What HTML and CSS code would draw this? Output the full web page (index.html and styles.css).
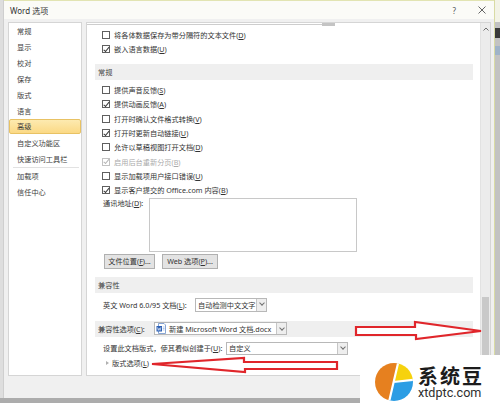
FILE: index.html
```html
<!DOCTYPE html>
<html lang="zh-CN">
<head>
<meta charset="utf-8">
<title>Word 选项</title>
<link rel="stylesheet" href="styles.css">
</head>
<body>
<div class="screen">
  <div class="left-edge"></div>
  <div class="dialog">
    <div class="titlebar">
      <span class="title">Word 选项</span>
      <span class="help">?</span>
      <svg class="close" width="8" height="8" viewBox="0 0 8 8"><path d="M0.5 0.5 L7.5 7.5 M7.5 0.5 L0.5 7.5" stroke="#555" stroke-width="0.9"/></svg>
    </div>
    <div class="body">
      <div class="nav">
        <div class="nav-item">常规</div>
        <div class="nav-item">显示</div>
        <div class="nav-item">校对</div>
        <div class="nav-item">保存</div>
        <div class="nav-item">版式</div>
        <div class="nav-item">语言</div>
        <div class="nav-item selected">高级</div>
        <div class="nav-item">自定义功能区</div>
        <div class="nav-item">快速访问工具栏</div>
        <div class="nav-sep"></div>
        <div class="nav-item">加载项</div>
        <div class="nav-item">信任中心</div>
      </div>
      <div class="main">
        <div class="content">
          <div class="clip"><span class="clip-end"></span></div>
          <div class="opt first"><span class="cb"></span><span>将各体数据保存为带分隔符的文本文件(<u>D</u>)</span></div>
          <div class="opt"><span class="cb checked"></span><span>嵌入语言数据(<u>U</u>)</span></div>
          <div class="sec sec-general">常规</div>
          <div class="opt after-sec"><span class="cb"></span><span>提供声音反馈(<u>S</u>)</span></div>
          <div class="opt"><span class="cb checked"></span><span>提供动画反馈(<u>A</u>)</span></div>
          <div class="opt"><span class="cb"></span><span>打开时确认文件格式转换(<u>V</u>)</span></div>
          <div class="opt"><span class="cb checked"></span><span>打开时更新自动链接(<u>U</u>)</span></div>
          <div class="opt"><span class="cb"></span><span>允许以草稿视图打开文档(<u>D</u>)</span></div>
          <div class="opt disabled"><span class="cb checked"></span><span>启用后台重新分页(<u>B</u>)</span></div>
          <div class="opt"><span class="cb"></span><span>显示加载项用户接口错误(<u>U</u>)</span></div>
          <div class="opt"><span class="cb checked"></span><span>显示客户提交的 Office.com 内容(<u>B</u>)</span></div>
          <div class="addr">
            <span class="addr-label">通讯地址(<u>D</u>):</span>
            <div class="addr-box"></div>
          </div>
          <div class="btns">
            <div class="btn btn-file">文件位置(<u>F</u>)...</div>
            <div class="btn btn-web">Web 选项(<u>P</u>)...</div>
          </div>
          <div class="sec sec-compat">兼容性</div>
          <div class="field field-en">
            <span class="label label-en">英文 Word 6.0/95 文档(<u>L</u>):</span>
            <div class="dd dd-en"><span class="dd-text">自动检测中文文字</span><span class="dd-arrow"></span></div>
          </div>
          <div class="band">
            <span class="label label-band">兼容性选项(<u>C</u>):</span>
            <div class="dd dd-doc">
              <svg class="doc-icon" width="10" height="11" viewBox="0 0 10 11"><path d="M2.5 0.5 H8 L9.5 2 V10.5 H2.5 Z" fill="#fff" stroke="#6b8fc9" stroke-width="0.8"/><rect x="0.5" y="3" width="5.5" height="5.5" fill="#2b5fb4"/><path d="M1.5 4.3 L2.3 7.4 L3.2 5.2 L4.1 7.4 L4.9 4.3" stroke="#fff" stroke-width="0.6" fill="none"/><path d="M6.8 4 H8.5 M6.8 5.5 H8.5 M6.8 7 H8.5" stroke="#7d9fd6" stroke-width="0.6"/></svg>
              <span class="dd-text">新建 Microsoft Word 文档.docx</span><span class="dd-arrow"></span>
            </div>
          </div>
          <div class="field field-layout">
            <span class="label label-layout">设置此文档版式，使其看似创建于(<u>U</u>):</span>
            <div class="dd dd-layout"><span class="dd-text">自定义</span><span class="dd-arrow"></span></div>
          </div>
          <div class="expander"><span class="tri"></span><span>版式选项(<u>L</u>)</span></div>
        </div>
        <div class="scrollbar">
          <div class="sb-btn"><svg width="6" height="4" viewBox="0 0 6 4"><path d="M0.5 3.5 L3 1 L5.5 3.5" stroke="#606060" stroke-width="0.9" fill="none"/></svg></div>
          <div class="sb-thumb"></div>
        </div>
      </div>
    </div>
    <div class="footer"></div>
  </div>
  <div class="right-edge">
    <div class="re-top"></div>
    <div class="re-icon"></div>
    <div class="re-icon2"></div>
  </div>
</div>

<svg class="arrows" width="500" height="403" viewBox="0 0 500 403">
  <polygon points="356,327 415,327 415,322 481,331 416,339 416,335 356,335" fill="#ffffff" stroke="#e0262b" stroke-width="2.2" stroke-linejoin="miter"/>
  <polygon points="152,364 244,358 244,362 337,362 337,369 245,369 245,372" fill="#ffffff" stroke="#e0262b" stroke-width="2.2" stroke-linejoin="miter"/>
</svg>

<div class="watermark">
  <svg class="wm-logo" width="38" height="38" viewBox="0 0 38 38">
    <defs><clipPath id="wmc"><circle cx="19" cy="19" r="19"/></clipPath></defs>
    <g clip-path="url(#wmc)">
      <polygon points="0,0 23,0 14,38 0,38" fill="#e6801f"/>
      <polygon points="23,0 38,0 38,17 18.5,19" fill="#f6d20d"/>
      <polygon points="18.5,19 38,17 38,38 14,38" fill="#2c9de4"/>
      <path d="M23.3 -1 L14 39 M18.5 19 L39 16.8" stroke="#ffffff" stroke-width="2.2"/>
    </g>
  </svg>
  <div class="wm-text">
    <span class="wm-cn">系统豆</span>
    <span class="wm-en">xtdptc.com</span>
  </div>
</div>
</body>
</html>
```

FILE: styles.css
```css
* { box-sizing: border-box; }
html, body { margin: 0; padding: 0; }
body {
  width: 500px;
  height: 403px;
  overflow: hidden;
  position: relative;
  background: #acacac;
  font-family: "Noto Sans", "Noto Sans CJK SC", sans-serif;
  font-size: 7.2px;
  color: #333;
}
u { text-decoration: underline; text-underline-offset: 1px; }

.screen { display: flex; height: 398px; }
.left-edge { width: 3px; background: #dedede; }
.right-edge { width: 5px; background: #c2c2c2; display: flex; flex-direction: column; }
.re-top { height: 22px; background: #f3f3e6; }
.re-icon { height: 10px; margin-top: 6px; background: #3a3a3a; }
.re-icon2 { height: 9px; margin-top: 8px; background: #9fb3c8; }

.dialog {
  width: 492px;
  display: flex;
  flex-direction: column;
  background: #f0f0f0;
  border-left: 1px solid #cfcfcf;
  border-right: 1px solid #d9dba4;
}
.titlebar {
  height: 19px;
  display: flex;
  align-items: center;
  background: #fbfbf7;
  border-top: 1px solid #e2e4b2;
  padding-left: 6px;
}
.title { font-size: 8px; color: #333; flex: 1; }
.help { font-size: 8px; color: #555; margin-right: 22px; }
.close { margin-right: 8px; }

.body { display: flex; gap: 4px; padding: 3px 3px 0 4px; height: 357px; }
.footer { height: 22px; }

.nav {
  width: 74px;
  background: #fff;
  border: 1px solid #d5d5d5;
}
.nav-item {
  height: 16px;
  line-height: 16px;
  padding-left: 8px;
  color: #3e3e3e;
  white-space: nowrap;
}
.nav-item.selected {
  height: 15px;
  line-height: 13px;
  margin-bottom: 1px;
  padding-left: 7px;
  background: linear-gradient(#fdeab0, #fbd985);
  border: 1px solid #e8c264;
  border-radius: 2px;
}
.nav-sep { height: 1px; background: #e2e2e2; margin: 0 2px 0 4px; }

.main {
  width: 405px;
  display: flex;
  background: #fff;
  border: 1px solid #d5d5d5;
}
.content { flex: 1; overflow: hidden; }
.scrollbar {
  width: 10px;
  background: #ececec;
  border-left: 1px solid #e2e2e2;
  display: flex;
  flex-direction: column;
}
.sb-btn { height: 12px; display: flex; justify-content: center; align-items: center; }
.sb-thumb { margin-top: 262px; height: 70px; background: #c9c9c9; margin-left: 1px; margin-right: 1px; }

.clip { width: 248px; height: 2px; border-bottom: 1px solid #cdcdcd; display: flex; justify-content: flex-end; }
.clip-end { width: 13px; height: 3px; background: #c4c4c4; }

.opt {
  height: 14.3px;
  display: flex;
  align-items: center;
  gap: 4px;
  padding-left: 15px;
  white-space: nowrap;
}
.opt.first { margin-top: 3px; }
.opt.after-sec { margin-top: 3px; }
.opt.disabled { color: #ababab; }
.cb {
  width: 8px;
  height: 8px;
  border: 1px solid #5f5f5f;
  background: #fff;
  position: relative;
  flex: none;
}
.cb.checked::after {
  content: "";
  position: absolute;
  left: 1.7px;
  top: -0.2px;
  width: 2.4px;
  height: 4.6px;
  border: solid #3a3a3a;
  border-width: 0 1px 1px 0;
  transform: rotate(40deg);
}
.opt.disabled .cb { border-color: #c2c2c2; }
.opt.disabled .cb.checked::after { border-color: #b5b5b5; }

.sec {
  height: 16px;
  margin: 0 7px 0 8px;
  background: #efefef;
  padding-left: 3px;
  display: flex;
  align-items: center;
  color: #444;
}
.sec-general { margin-top: 7.4px; }
.sec-compat { margin-top: 8px; }

.addr { display: flex; margin-top: 0.6px; padding-left: 16px; }
.addr-label { width: 46px; line-height: 11px; white-space: nowrap; }
.addr-box { width: 208px; height: 54px; border: 1px solid #c8c8c8; background: #fff; }

.btns { display: flex; gap: 7px; padding-left: 17px; margin-top: 2px; }
.btn {
  height: 15px;
  background: #e3e3e3;
  border: 1px solid #b0b0b0;
  display: flex;
  align-items: center;
  justify-content: center;
  white-space: nowrap;
}
.btn-file { width: 51px; }
.btn-web { width: 56px; }

.field { display: flex; align-items: center; padding-left: 16px; }
.field-en { margin-top: 5px; height: 14px; }
.field-layout { margin-top: 5px; height: 13px; }
.label { white-space: nowrap; flex: none; }
.label-en { width: 92px; }
.label-layout { width: 123px; }
.label-band { width: 56px; }

.band {
  margin: 9px 7px 0 8px;
  height: 16px;
  background: #efefef;
  padding-left: 3px;
  display: flex;
  align-items: center;
}

.dd {
  display: flex;
  align-items: center;
  background: #fff;
  border: 1px solid #b8b8b8;
}
.dd-en { width: 72px; height: 14px; }
.dd-doc { width: 133px; height: 13px; }
.dd-layout { width: 122px; height: 13px; }
.dd-text { flex: 1; padding-left: 2px; white-space: nowrap; overflow: hidden; }
.dd-doc .dd-text { padding-left: 3px; }
.doc-icon { margin-left: 1px; flex: none; }
.dd-arrow {
  width: 10px;
  height: 100%;
  background: #eeeeee;
  border-left: 1px solid #c6c6c6;
  position: relative;
  flex: none;
}
.dd-arrow::after {
  content: "";
  position: absolute;
  left: 3px;
  top: 2.5px;
  width: 3px;
  height: 3px;
  border: solid #707070;
  border-width: 0 1px 1px 0;
  transform: rotate(45deg);
}

.expander { display: flex; align-items: center; gap: 3px; padding-left: 19px; height: 12px; margin-top: 2px; }
.tri {
  width: 0;
  height: 0;
  border-top: 2.5px solid transparent;
  border-bottom: 2.5px solid transparent;
  border-left: 3.5px solid #b0b0b0;
}

.arrows { position: absolute; left: 0; top: 0; pointer-events: none; }

.watermark {
  position: absolute;
  left: 360px;
  top: 355px;
  width: 140px;
  height: 48px;
  background: #fff;
  border-top-left-radius: 5px;
  display: flex;
  align-items: flex-start;
  padding: 8px 0 0 15px;
  gap: 5px;
}
.wm-logo { flex: none; }
.wm-text { display: flex; flex-direction: column; margin-top: 3px; }
.wm-cn {
  font-family: "Noto Sans CJK SC", sans-serif;
  font-weight: 700;
  font-size: 20px;
  line-height: 20px;
  height: 20px;
  color: #1c1c1c;
  letter-spacing: 2px;
}
.wm-en {
  font-family: "Roboto", "Liberation Sans", sans-serif;
  font-size: 12.6px;
  line-height: 11px;
  height: 11px;
  color: #2e2e2e;
  margin-top: 1px;
}
```
